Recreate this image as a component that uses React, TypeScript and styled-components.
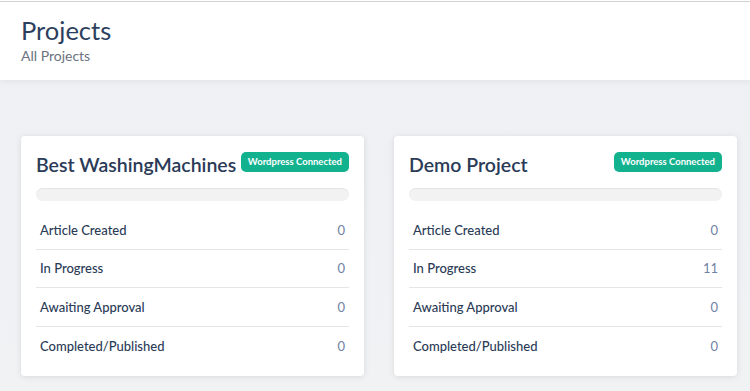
import React from 'react';
import styled, { createGlobalStyle } from 'styled-components';

const colors = {
  heading: '#2b3b57',
  subText: '#6b7280',
  value: '#6f82a3',
  badge: '#13b28f',
  divider: '#e3e5e8',
  pageBg: '#eff0f3',
};

const GlobalStyle = createGlobalStyle`
  html, body {
    margin: 0;
    padding: 0;
    font-family: Lato, "Noto Sans", sans-serif;
  }
  body {
    padding-top: 1px;
    background: #fff;
  }
`;

type Stat = { label: string; value: number };

type Project = {
  name: string;
  stats: Stat[];
};

const projects: Project[] = [
  {
    name: 'Best WashingMachines',
    stats: [
      { label: 'Article Created', value: 0 },
      { label: 'In Progress', value: 0 },
      { label: 'Awaiting Approval', value: 0 },
      { label: 'Completed/Published', value: 0 },
    ],
  },
  {
    name: 'Demo Project',
    stats: [
      { label: 'Article Created', value: 0 },
      { label: 'In Progress', value: 11 },
      { label: 'Awaiting Approval', value: 0 },
      { label: 'Completed/Published', value: 0 },
    ],
  },
];

const Page = styled.div`
  min-height: 390px;
  background: linear-gradient(180deg, #ebecef 0%, ${colors.pageBg} 60px, #f1f2f4 100%);
`;

const Header = styled.header`
  background: #fff;
  border-top: 1px solid #d3d3d3;
  height: 79px;
  box-sizing: border-box;
  padding: 13px 21px 0;
  box-shadow: 0 2px 6px rgba(0, 0, 0, 0.05);
  position: relative;
`;

const Title = styled.h1`
  margin: 0;
  font-size: 25.5px;
  font-weight: 400;
  color: #2d3f5e;
  line-height: 30px;
`;

const Subtitle = styled.p`
  margin: 2px 0 0;
  font-size: 14px;
  color: ${colors.subText};
  line-height: 18px;
`;

const Grid = styled.main`
  display: grid;
  grid-template-columns: repeat(2, 343px);
  gap: 30px;
  padding: 56px 21px 0;
`;

const Card = styled.section`
  background: #fff;
  border-radius: 4px;
  box-shadow: 0 1px 6px rgba(0, 0, 0, 0.1);
  padding: 14px 15px 12px;
  height: 240px;
  box-sizing: border-box;
`;

const CardHead = styled.div`
  display: flex;
  justify-content: space-between;
  align-items: flex-start;
  gap: 4px;
`;

const CardTitle = styled.h2`
  margin: 0;
  font-size: 19.5px;
  font-weight: 600;
  color: ${colors.heading};
  line-height: 30px;
  white-space: nowrap;
`;

const Badge = styled.span`
  background: ${colors.badge};
  color: #fff;
  font-size: 9.5px;
  font-weight: 700;
  line-height: 20px;
  height: 20px;
  padding: 0 7px;
  border-radius: 5px;
  white-space: nowrap;
  margin-top: 2px;
`;

const Progress = styled.div`
  margin-top: 8px;
  height: 13px;
  border-radius: 7px;
  background: #f2f2f3;
  box-shadow: inset 0 1px 1px rgba(0, 0, 0, 0.06);
`;

const StatList = styled.ul`
  list-style: none;
  margin: 10px 0 0;
  padding: 0;
`;

const StatRow = styled.li`
  display: flex;
  justify-content: space-between;
  align-items: center;
  height: 38.5px;
  padding: 0 4px;
  font-size: 13px;
  border-bottom: 1px solid ${colors.divider};
  box-sizing: border-box;

  &:last-child {
    border-bottom: none;
  }
`;

const StatLabel = styled.span`
  color: ${colors.heading};
  font-weight: 500;
`;

const StatValue = styled.span`
  color: ${colors.value};
`;

function ProjectCard({ name, stats }: Project): React.ReactElement {
  return (
    <Card>
      <CardHead>
        <CardTitle>{name}</CardTitle>
        <Badge>Wordpress Connected</Badge>
      </CardHead>
      <Progress />
      <StatList>
        {stats.map((s) => (
          <StatRow key={s.label}>
            <StatLabel>{s.label}</StatLabel>
            <StatValue>{s.value}</StatValue>
          </StatRow>
        ))}
      </StatList>
    </Card>
  );
}

export default function App(): React.ReactElement {
  return (
    <>
      <GlobalStyle />
      <Page>
        <Header>
          <Title>Projects</Title>
          <Subtitle>All Projects</Subtitle>
        </Header>
        <Grid>
          {projects.map((p) => (
            <ProjectCard key={p.name} {...p} />
          ))}
        </Grid>
      </Page>
    </>
  );
}
